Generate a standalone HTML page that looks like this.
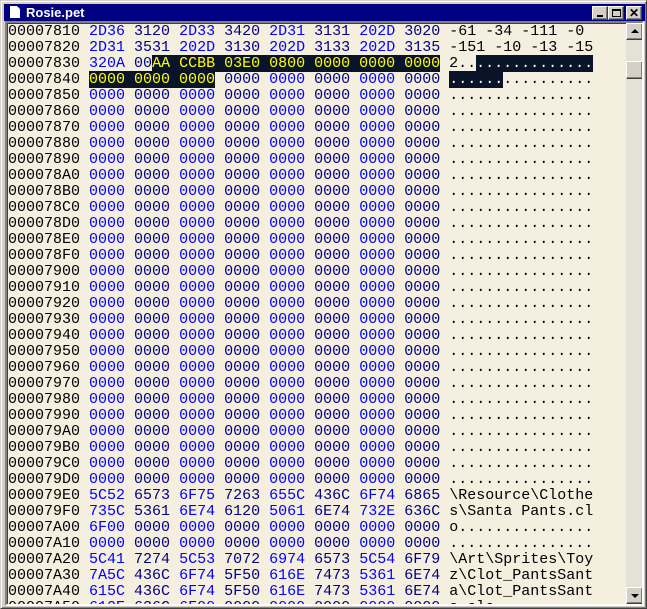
<!DOCTYPE html>
<html><head><meta charset="utf-8"><style>
*{margin:0;padding:0;box-sizing:border-box}
body{width:647px;height:609px;background:#d4d0c8;position:relative;overflow:hidden;font-family:"Liberation Sans",sans-serif}
.win{position:absolute;left:0;top:0;width:647px;height:609px;border:1px solid;border-color:#d4d0c8 #404040 #404040 #d4d0c8;box-shadow:inset 1px 1px 0 #fff,inset -1px -1px 0 #808080}
.title{position:absolute;left:3px;top:3px;width:641px;height:17px;background:#000080}
.title .t{position:absolute;left:22px;top:1px;color:#fff;font-weight:bold;font-size:13px}
.doc{position:absolute;left:6px;top:2px;width:10px;height:12px;background:#fff}
.doc:after{content:"";position:absolute;right:0;top:0;border-style:solid;border-width:0 3px 3px 0;border-color:transparent #000080 transparent transparent}
.btn{position:absolute;top:2px;width:16px;height:14px;background:#d4d0c8;border:1px solid;border-color:#fff #404040 #404040 #fff;box-shadow:inset -1px -1px 0 #808080}
.content{position:absolute;left:4px;top:20px;width:639px;height:585px;border:2px solid;border-color:#808080 #fff #fff #808080;box-shadow:inset 1px 1px 0 #404040;background:#f5efe0;overflow:hidden}
.rows{position:absolute;left:1px;top:1px;font-family:"Liberation Mono",monospace;font-size:15px;line-height:16px;color:#000}
.rows div{height:16px;white-space:pre}
.b{color:#0000ff}.n{color:#000080}
.h{background:#0a1428;color:#ffff00}
.ha{background:#0a1428;color:#fff}
.sb{position:absolute;left:619px;top:0;width:17px;height:581px;background:#e4e1d6}
.sbtn{position:absolute;left:0;width:17px;height:17px;background:#d4d0c8;border:1px solid;border-color:#fff #404040 #404040 #fff;box-shadow:inset -1px -1px 0 #808080}
</style></head><body>
<div class="win">
<div class="title"><div class="doc"></div><div class="t">Rosie.pet</div>
<div class="btn" style="left:588px"><div style="position:absolute;left:4px;top:8px;width:6px;height:2px;background:#000"></div></div>
<div class="btn" style="left:604px"><div style="position:absolute;left:3px;top:2px;width:9px;height:8px;border:1px solid #000;border-top-width:2px"></div></div>
<div class="btn" style="left:622px;font-size:12px;font-weight:bold;text-align:center;line-height:12px">✕</div>
</div>
<div class="content">
<div class="rows"><div>00007810 <span class="b">2D36</span> <span class="n">3120</span> <span class="b">2D33</span> <span class="n">3420</span> <span class="b">2D31</span> <span class="n">3131</span> <span class="b">202D</span> <span class="n">3020</span> -61 -34 -111 -0</div><div>00007820 <span class="b">2D31</span> <span class="n">3531</span> <span class="b">202D</span> <span class="n">3130</span> <span class="b">202D</span> <span class="n">3133</span> <span class="b">202D</span> <span class="n">3135</span> -151 -10 -13 -15</div><div>00007830 <span class="b">320A</span> <span class="n">00</span><span class="h">AA CCBB 03E0 0800 0000 0000 0000</span> 2..<span class="ha">.............</span></div><div>00007840 <span class="h">0000 0000 0000</span> <span class="n">0000</span> <span class="b">0000</span> <span class="n">0000</span> <span class="b">0000</span> <span class="n">0000</span> <span class="ha">......</span>..........</div><div>00007850 <span class="b">0000</span> <span class="n">0000</span> <span class="b">0000</span> <span class="n">0000</span> <span class="b">0000</span> <span class="n">0000</span> <span class="b">0000</span> <span class="n">0000</span> ................</div><div>00007860 <span class="b">0000</span> <span class="n">0000</span> <span class="b">0000</span> <span class="n">0000</span> <span class="b">0000</span> <span class="n">0000</span> <span class="b">0000</span> <span class="n">0000</span> ................</div><div>00007870 <span class="b">0000</span> <span class="n">0000</span> <span class="b">0000</span> <span class="n">0000</span> <span class="b">0000</span> <span class="n">0000</span> <span class="b">0000</span> <span class="n">0000</span> ................</div><div>00007880 <span class="b">0000</span> <span class="n">0000</span> <span class="b">0000</span> <span class="n">0000</span> <span class="b">0000</span> <span class="n">0000</span> <span class="b">0000</span> <span class="n">0000</span> ................</div><div>00007890 <span class="b">0000</span> <span class="n">0000</span> <span class="b">0000</span> <span class="n">0000</span> <span class="b">0000</span> <span class="n">0000</span> <span class="b">0000</span> <span class="n">0000</span> ................</div><div>000078A0 <span class="b">0000</span> <span class="n">0000</span> <span class="b">0000</span> <span class="n">0000</span> <span class="b">0000</span> <span class="n">0000</span> <span class="b">0000</span> <span class="n">0000</span> ................</div><div>000078B0 <span class="b">0000</span> <span class="n">0000</span> <span class="b">0000</span> <span class="n">0000</span> <span class="b">0000</span> <span class="n">0000</span> <span class="b">0000</span> <span class="n">0000</span> ................</div><div>000078C0 <span class="b">0000</span> <span class="n">0000</span> <span class="b">0000</span> <span class="n">0000</span> <span class="b">0000</span> <span class="n">0000</span> <span class="b">0000</span> <span class="n">0000</span> ................</div><div>000078D0 <span class="b">0000</span> <span class="n">0000</span> <span class="b">0000</span> <span class="n">0000</span> <span class="b">0000</span> <span class="n">0000</span> <span class="b">0000</span> <span class="n">0000</span> ................</div><div>000078E0 <span class="b">0000</span> <span class="n">0000</span> <span class="b">0000</span> <span class="n">0000</span> <span class="b">0000</span> <span class="n">0000</span> <span class="b">0000</span> <span class="n">0000</span> ................</div><div>000078F0 <span class="b">0000</span> <span class="n">0000</span> <span class="b">0000</span> <span class="n">0000</span> <span class="b">0000</span> <span class="n">0000</span> <span class="b">0000</span> <span class="n">0000</span> ................</div><div>00007900 <span class="b">0000</span> <span class="n">0000</span> <span class="b">0000</span> <span class="n">0000</span> <span class="b">0000</span> <span class="n">0000</span> <span class="b">0000</span> <span class="n">0000</span> ................</div><div>00007910 <span class="b">0000</span> <span class="n">0000</span> <span class="b">0000</span> <span class="n">0000</span> <span class="b">0000</span> <span class="n">0000</span> <span class="b">0000</span> <span class="n">0000</span> ................</div><div>00007920 <span class="b">0000</span> <span class="n">0000</span> <span class="b">0000</span> <span class="n">0000</span> <span class="b">0000</span> <span class="n">0000</span> <span class="b">0000</span> <span class="n">0000</span> ................</div><div>00007930 <span class="b">0000</span> <span class="n">0000</span> <span class="b">0000</span> <span class="n">0000</span> <span class="b">0000</span> <span class="n">0000</span> <span class="b">0000</span> <span class="n">0000</span> ................</div><div>00007940 <span class="b">0000</span> <span class="n">0000</span> <span class="b">0000</span> <span class="n">0000</span> <span class="b">0000</span> <span class="n">0000</span> <span class="b">0000</span> <span class="n">0000</span> ................</div><div>00007950 <span class="b">0000</span> <span class="n">0000</span> <span class="b">0000</span> <span class="n">0000</span> <span class="b">0000</span> <span class="n">0000</span> <span class="b">0000</span> <span class="n">0000</span> ................</div><div>00007960 <span class="b">0000</span> <span class="n">0000</span> <span class="b">0000</span> <span class="n">0000</span> <span class="b">0000</span> <span class="n">0000</span> <span class="b">0000</span> <span class="n">0000</span> ................</div><div>00007970 <span class="b">0000</span> <span class="n">0000</span> <span class="b">0000</span> <span class="n">0000</span> <span class="b">0000</span> <span class="n">0000</span> <span class="b">0000</span> <span class="n">0000</span> ................</div><div>00007980 <span class="b">0000</span> <span class="n">0000</span> <span class="b">0000</span> <span class="n">0000</span> <span class="b">0000</span> <span class="n">0000</span> <span class="b">0000</span> <span class="n">0000</span> ................</div><div>00007990 <span class="b">0000</span> <span class="n">0000</span> <span class="b">0000</span> <span class="n">0000</span> <span class="b">0000</span> <span class="n">0000</span> <span class="b">0000</span> <span class="n">0000</span> ................</div><div>000079A0 <span class="b">0000</span> <span class="n">0000</span> <span class="b">0000</span> <span class="n">0000</span> <span class="b">0000</span> <span class="n">0000</span> <span class="b">0000</span> <span class="n">0000</span> ................</div><div>000079B0 <span class="b">0000</span> <span class="n">0000</span> <span class="b">0000</span> <span class="n">0000</span> <span class="b">0000</span> <span class="n">0000</span> <span class="b">0000</span> <span class="n">0000</span> ................</div><div>000079C0 <span class="b">0000</span> <span class="n">0000</span> <span class="b">0000</span> <span class="n">0000</span> <span class="b">0000</span> <span class="n">0000</span> <span class="b">0000</span> <span class="n">0000</span> ................</div><div>000079D0 <span class="b">0000</span> <span class="n">0000</span> <span class="b">0000</span> <span class="n">0000</span> <span class="b">0000</span> <span class="n">0000</span> <span class="b">0000</span> <span class="n">0000</span> ................</div><div>000079E0 <span class="b">5C52</span> <span class="n">6573</span> <span class="b">6F75</span> <span class="n">7263</span> <span class="b">655C</span> <span class="n">436C</span> <span class="b">6F74</span> <span class="n">6865</span> \Resource\Clothe</div><div>000079F0 <span class="b">735C</span> <span class="n">5361</span> <span class="b">6E74</span> <span class="n">6120</span> <span class="b">5061</span> <span class="n">6E74</span> <span class="b">732E</span> <span class="n">636C</span> s\Santa Pants.cl</div><div>00007A00 <span class="b">6F00</span> <span class="n">0000</span> <span class="b">0000</span> <span class="n">0000</span> <span class="b">0000</span> <span class="n">0000</span> <span class="b">0000</span> <span class="n">0000</span> o...............</div><div>00007A10 <span class="b">0000</span> <span class="n">0000</span> <span class="b">0000</span> <span class="n">0000</span> <span class="b">0000</span> <span class="n">0000</span> <span class="b">0000</span> <span class="n">0000</span> ................</div><div>00007A20 <span class="b">5C41</span> <span class="n">7274</span> <span class="b">5C53</span> <span class="n">7072</span> <span class="b">6974</span> <span class="n">6573</span> <span class="b">5C54</span> <span class="n">6F79</span> \Art\Sprites\Toy</div><div>00007A30 <span class="b">7A5C</span> <span class="n">436C</span> <span class="b">6F74</span> <span class="n">5F50</span> <span class="b">616E</span> <span class="n">7473</span> <span class="b">5361</span> <span class="n">6E74</span> z\Clot_PantsSant</div><div>00007A40 <span class="b">615C</span> <span class="n">436C</span> <span class="b">6F74</span> <span class="n">5F50</span> <span class="b">616E</span> <span class="n">7473</span> <span class="b">5361</span> <span class="n">6E74</span> a\Clot_PantsSant</div><div>00007A50 <span class="b">612E</span> <span class="n">636C</span> <span class="b">6F00</span> <span class="n">0000</span> <span class="b">0000</span> <span class="n">0000</span> <span class="b">0000</span> <span class="n">0000</span> a.clo...........</div></div>
<div class="sb">
<div class="sbtn" style="top:0"><div style="position:absolute;left:4px;top:5px;border-style:solid;border-width:0 4px 4px 4px;border-color:transparent transparent #000 transparent"></div></div>
<div class="sbtn" style="top:38px;height:18px"></div>
<div class="sbtn" style="top:564px"><div style="position:absolute;left:4px;top:6px;border-style:solid;border-width:4px 4px 0 4px;border-color:#000 transparent transparent transparent"></div></div>
</div>
</div>
</div>
</body></html>
